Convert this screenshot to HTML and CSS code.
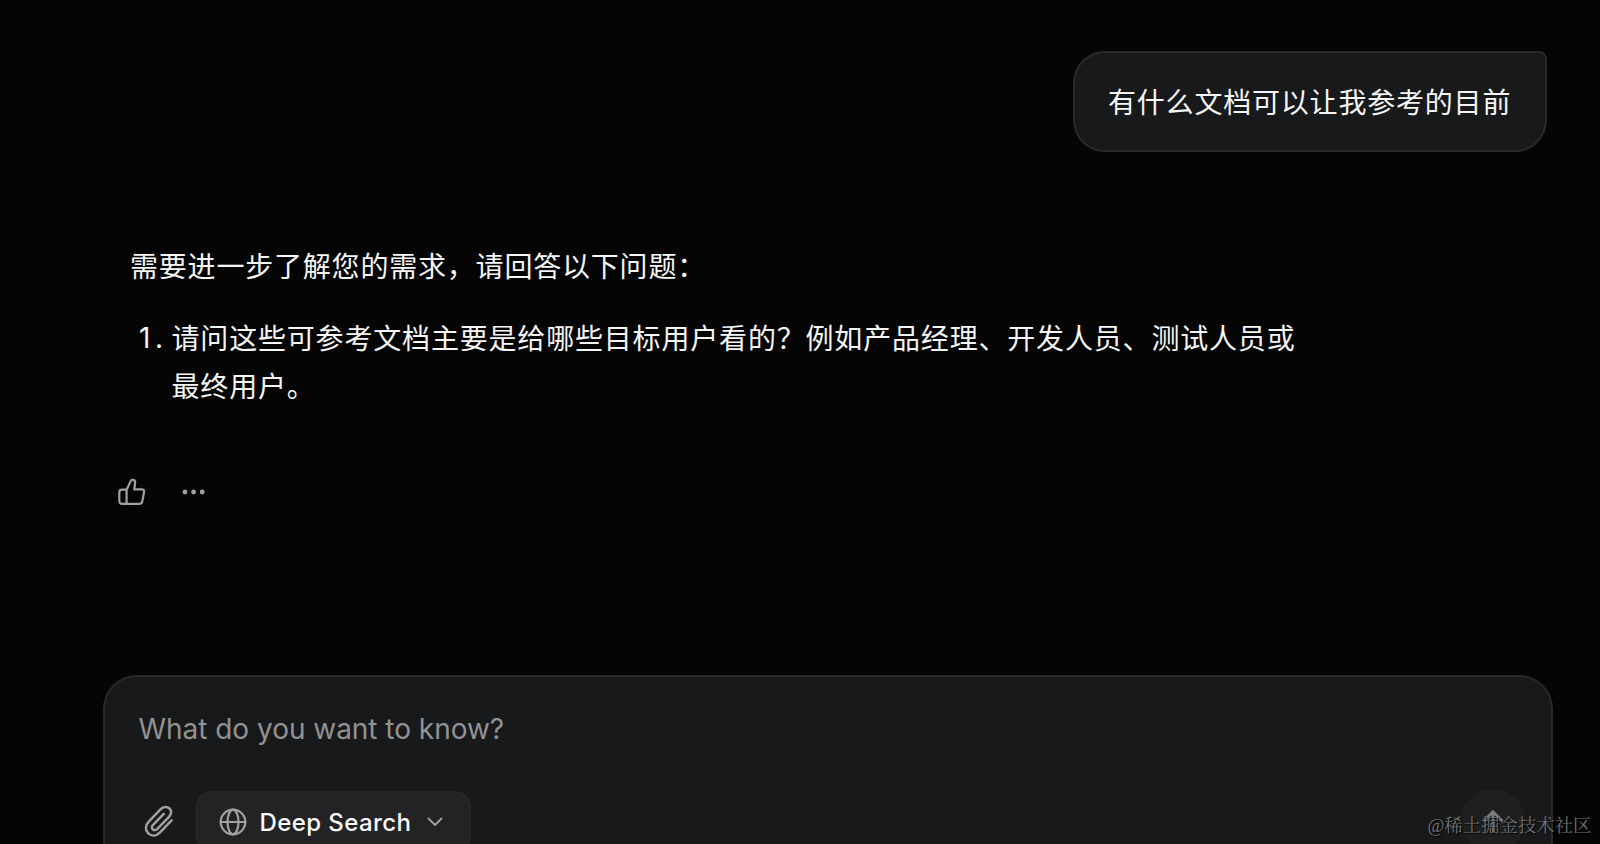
FILE: index.html
```html
<!DOCTYPE html>
<html lang="zh-CN">
<head>
<meta charset="utf-8">
<title>Chat</title>
<link rel="stylesheet" href="styles.css">
</head>
<body>
<main class="chat">
  <div class="user-row"><div class="bubble">有什么文档可以让我参考的目前</div></div>
  <section class="answer">
    <p class="intro">需要进一步了解您的需求，请回答以下问题：</p>
    <div class="item"><span class="number">1.</span><p class="question">请问这些可参考文档主要是给哪些目标用户看的？例如产品经理、开发人员、测试人员或<br>最终用户。</p></div>
  </section>
  <div class="actions">
    <svg class="thumb" width="28" height="28" viewBox="0 0 28 28"><path d="M8.6 11.7 12.4 3.6C13 2.2 13.8 1.5 14.8 1.7c1.7.3 2.5 1.5 2.3 3.3L16.3 11.3h7.4c1.8 0 2.7 1 2.4 2.6l-1.8 9.4c-.3 1.7-1.2 2.5-2.9 2.5H4.1c-1.8 0-2.8-1-2.8-2.7v-8.7c0-1.7.9-2.7 2.6-2.7zM8.6 11.7v14.1"/></svg>
    <svg class="more" width="24" height="8" viewBox="0 0 24 8"><circle cx="3" cy="4" r="2.4"/><circle cx="11.6" cy="4" r="2.4"/><circle cx="20.2" cy="4" r="2.4"/></svg>
  </div>
  <section class="composer">
    <div class="placeholder">What do you want to know?</div>
    <div class="tools">
      <svg class="clip" width="30" height="32" viewBox="0 0 30 32"><path d="M27.6 15.4 16.3 27.2c-4 4.1-8.7 4.2-12 1.2-3.4-3.2-3.2-8 .7-12L16.7 4.1c2.7-2.8 6.6-2.8 8.8-.6 2.3 2.2 2.1 5.6-.5 8.3L13.3 23.8c-1.5 1.6-3.4 1.7-4.6.5-1.2-1.1-1.1-3 .4-4.5L19.8 8.8"/></svg>
      <div class="search">
        <svg class="globe" width="28" height="28" viewBox="0 0 28 28"><circle cx="14" cy="14" r="12.3"/><ellipse cx="14" cy="14" rx="5.5" ry="12.3"/><path d="M1.7 14h24.6"/></svg>
        <span class="label">Deep Search</span>
        <svg class="chevron" width="16" height="10" viewBox="0 0 16 10"><path d="m1.5 1.5 6.5 6.5 6.5-6.5"/></svg>
      </div>
      <div class="send"><svg class="arrow" width="24" height="24" viewBox="0 0 24 24"><path d="M12 23V3M2.5 12.3 12 2.8l9.5 9.5"/></svg></div>
    </div>
  </section>
</main>
<div class="watermark">@稀土掘金技术社区</div>
</body>
</html>
```
FILE: styles.css
```css
* { box-sizing: border-box; }
body {
  margin: 0;
  height: 844px;
  overflow: hidden;
  position: relative;
  background: #050505;
  color: #f5f5f5;
  font-family: Inter, "Noto Sans CJK SC", sans-serif;
  font-size: 28px;
  line-height: 47.5px;
}
p { margin: 0; }
svg { display: block; flex: none; fill: none; stroke: #a0a0a2; stroke-width: 2.2; stroke-linecap: round; stroke-linejoin: round; }
.chat { display: flex; flex-direction: column; height: 844px; overflow: hidden; padding: 51px 47px 0 103px; }
.user-row { display: flex; justify-content: flex-end; padding-right: 6.5px; }
.bubble {
  width: 473.5px;
  height: 101px;
  padding: 26.5px 0 0 33px;
  border: 2px solid #29292b;
  border-radius: 32px 8px 32px 32px;
  background: #18191b;
  letter-spacing: .8px;
  white-space: nowrap;
}
.answer { margin-top: 92px; padding-left: 27px; letter-spacing: .8px; white-space: nowrap; }
.item { display: flex; margin-top: 23px; padding-left: 9px; }
.number { width: 32.5px; letter-spacing: 4.5px; }
.question { letter-spacing: .82px; line-height: 48px; }
.actions { display: flex; align-items: center; gap: 36px; height: 32px; margin-top: 67px; padding-left: 15px; }
.more { fill: #a0a0a2; stroke: none; }
.composer {
  flex: none;
  width: 1450px;
  height: 220px;
  margin-top: 169px;
  border: 2px solid #29292b;
  border-radius: 34px;
  background: #18191b;
}
.placeholder { padding: 29px 0 0 33.5px; color: #929294; letter-spacing: -.03px; }
.tools { display: flex; align-items: flex-start; padding: 38px 26px 0 39px; }
.clip { margin-top: 14px; stroke-width: 2.5; }
.search {
  display: flex;
  align-items: center;
  width: 274.5px;
  height: 62px;
  margin-left: 22px;
  padding-left: 21px;
  border: 2px solid #272729;
  border-radius: 16px;
  background: #232325;
}
.label { width: 154px; margin-left: 12.5px; padding-top: 1px; color: #fafafa; font-size: 24px; font-weight: 500; letter-spacing: .4px; white-space: nowrap; }
.chevron { margin-left: 13.5px; stroke-width: 1.8; }
.send { display: flex; justify-content: center; width: 64px; height: 64px; margin-left: auto; margin-top: -2px; padding-top: 20px; border-radius: 50%; background: #1e1f21; }
.arrow { stroke-width: 2.8; stroke: #7c7c7e; stroke-linecap: butt; stroke-linejoin: miter; }
.watermark {
  position: absolute;
  right: 8.5px;
  bottom: 4px;
  color: #707072;
  font: 18.4px/28px "Liberation Serif", "Noto Serif CJK SC", "Noto Sans CJK SC", serif;
  text-shadow: 1px 1px 1px #000;
  white-space: nowrap;
}
```
